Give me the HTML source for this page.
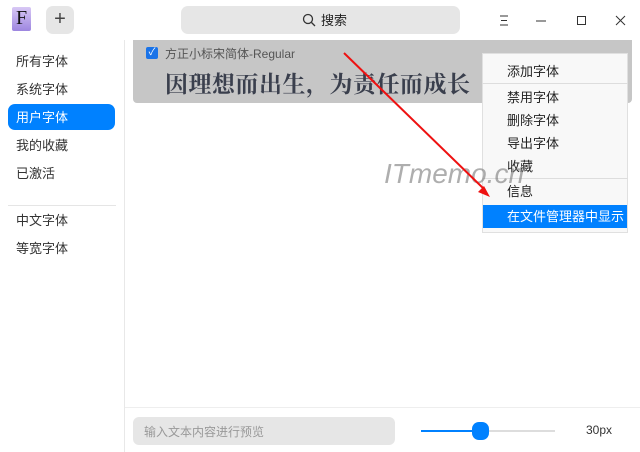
<!DOCTYPE html>
<html><head><meta charset="utf-8"><style>
*{margin:0;padding:0;box-sizing:border-box}
body{width:640px;height:452px;overflow:hidden;background:#fff;font-family:"Liberation Sans","Noto Sans CJK SC",sans-serif;position:relative;color:#333}
.a{position:absolute}
.side div{position:absolute;left:16px;font-size:13px;color:#333}
.m{position:absolute;left:507px;font-size:13px;color:#222}
</style></head><body>
<div class="a" style="left:0;top:0;width:640px;height:40px;background:#fff"></div>
<div class="a" style="left:12px;top:7px;width:19px;height:24px;background:linear-gradient(#d8c8f5,#9d86e0);border-radius:2px;font-family:'Liberation Serif',serif;font-size:20px;text-align:center;line-height:22px;color:#111">F</div>
<div class="a" style="left:46px;top:6px;width:28px;height:28px;background:#e6e6e6;border-radius:7px;text-align:center;line-height:26px;font-size:20px;color:#444">+</div>
<div class="a" style="left:181px;top:6px;width:279px;height:28px;background:#e6e6e6;border-radius:7px"></div>
<svg class="a" style="left:302px;top:13px" width="14" height="14"><circle cx="6" cy="6" r="4.5" fill="none" stroke="#333" stroke-width="1.3"/><path d="M9.5 9.5L13 13" stroke="#333" stroke-width="1.3"/></svg>
<div class="a" style="left:321px;top:10px;font-size:13px;color:#222">搜索</div>
<svg class="a" style="left:496px;top:14px" width="140" height="14"><path d="M4 2h8M5 6.5h6M4 11h8" stroke="#333" stroke-width="1"/><path d="M40 7h10" stroke="#333"/><rect x="81.5" y="2.5" width="8" height="8" fill="none" stroke="#333"/><path d="M120 2l9 9M129 2l-9 9" stroke="#333"/></svg>
<div class="a" style="left:124px;top:40px;width:1px;height:412px;background:#e8e8e8"></div>
<div class="side">
<div style="top:51px">所有字体</div>
<div style="top:79px">系统字体</div>
<div class="a" style="left:8px;top:104px;width:107px;height:26px;background:#0081ff;border-radius:7px"></div>
<div style="top:107px;color:#fff">用户字体</div>
<div style="top:135px">我的收藏</div>
<div style="top:163px">已激活</div>
<div class="a" style="left:8px;top:205px;width:108px;height:1px;background:#e5e5e5"></div>
<div style="top:210px">中文字体</div>
<div style="top:238px">等宽字体</div>
</div>
<div class="a" style="left:133px;top:40px;width:499px;height:63px;background:#c6c6c6;border-radius:0 0 4px 4px"></div>
<div class="a" style="left:146px;top:47px;width:12px;height:12px;background:#1a73e8;border-radius:2px;color:#fff;font-size:10px;line-height:12px;text-align:center">✓</div>
<div class="a" style="left:165px;top:45px;font-size:12px;color:#555">方正小标宋简体-Regular</div>
<div class="a" style="left:165px;top:66px;font-size:23px;color:#3a3f4d;font-family:'Noto Serif CJK SC',serif;font-weight:bold;letter-spacing:0.5px">因理想而出生，为责任而成长</div>
<div class="a" style="left:482px;top:53px;width:146px;height:180px;background:#f8f8f8;border:1px solid #e0e0e0"></div>
<div class="a" style="left:482px;top:83px;width:146px;height:1px;background:#ddd"></div>
<div class="a" style="left:482px;top:178px;width:146px;height:1px;background:#ddd"></div>
<div class="a" style="left:483px;top:205px;width:144px;height:23px;background:#0081ff"></div>
<div class="m" style="top:61px">添加字体</div>
<div class="m" style="top:87px">禁用字体</div>
<div class="m" style="top:110px">删除字体</div>
<div class="m" style="top:133px">导出字体</div>
<div class="m" style="top:156px">收藏</div>
<div class="m" style="top:181px">信息</div>
<div class="m" style="top:206px;color:#fff">在文件管理器中显示</div>
<div class="a" style="left:384px;top:158px;font-size:28px;font-style:italic;color:rgba(120,120,120,0.6)">ITmemo.cn</div>
<svg class="a" style="left:0;top:0" width="640" height="452"><path d="M344 53L485 190" stroke="#e11" stroke-width="2"/><path d="M490 197l-12-5 6-6z" fill="#e11"/></svg>
<div class="a" style="left:125px;top:407px;width:515px;height:1px;background:#eee"></div>
<div class="a" style="left:133px;top:417px;width:262px;height:28px;background:#e6e6e6;border-radius:6px"></div>
<div class="a" style="left:144px;top:423px;font-size:12px;color:#999">输入文本内容进行预览</div>
<div class="a" style="left:421px;top:430px;width:60px;height:2px;background:#0081ff"></div>
<div class="a" style="left:481px;top:430px;width:74px;height:2px;background:#ddd"></div>
<div class="a" style="left:472px;top:422px;width:17px;height:18px;background:#0081ff;border-radius:7px"></div>
<div class="a" style="left:586px;top:423px;font-size:12px;color:#333">30px</div>
</body></html>
